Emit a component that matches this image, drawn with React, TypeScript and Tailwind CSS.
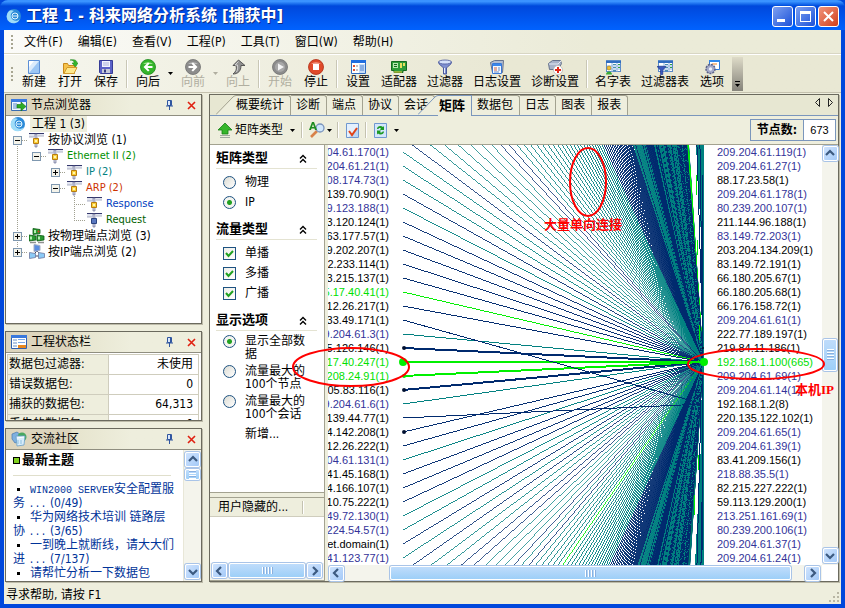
import type { ReactNode } from 'react';
import clsx from 'clsx';

const HUB_X = 312;
const HUB_ROW = 15;
const ROW_H = 14;

const TEAL = '#008080';
const NAVY = '#002a6e';
const GREEN = '#00f000';

type Tone = 'k' | 'b' | 'g';

const toneClass: Record<Tone, string> = {
  k: 'text-black',
  b: 'text-[#333399]',
  g: 'text-[#00e000]',
};

const leftNodes: [string, Tone][] = [
  ['04.61.170(1)', 'b'],
  ['204.61.21(1)', 'b'],
  ['08.174.73(1)', 'b'],
  ['139.70.90(1)', 'k'],
  ['9.123.188(1)', 'b'],
  ['3.120.124(1)', 'k'],
  ['63.177.57(1)', 'k'],
  ['9.202.207(1)', 'k'],
  ['2.233.114(1)', 'k'],
  ['3.215.137(1)', 'k'],
  ['5.17.40.41(1)', 'g'],
  ['12.26.217(1)', 'k'],
  ['33.49.171(1)', 'k'],
  ['9.204.61.3(1)', 'b'],
  ['5.126.146(1)', 'k'],
  ['17.40.247(1)', 'g'],
  ['208.24.91(1)', 'g'],
  ['05.83.116(1)', 'k'],
  ['9.204.61.6(1)', 'b'],
  ['139.44.77(1)', 'k'],
  ['4.142.208(1)', 'k'],
  ['12.26.222(1)', 'k'],
  ['04.61.131(1)', 'b'],
  ['41.45.168(1)', 'k'],
  ['4.166.107(1)', 'k'],
  ['10.75.222(1)', 'k'],
  ['49.72.130(1)', 'b'],
  ['224.54.57(1)', 'b'],
  ['et.domain(1)', 'k'],
  ['41.123.77(1)', 'b'],
];

const rightNodes: [string, Tone][] = [
  ['209.204.61.119(1)', 'b'],
  ['209.204.61.27(1)', 'b'],
  ['88.17.23.58(1)', 'k'],
  ['209.204.61.178(1)', 'b'],
  ['80.239.200.107(1)', 'b'],
  ['211.144.96.188(1)', 'k'],
  ['83.149.72.203(1)', 'b'],
  ['203.204.134.209(1)', 'k'],
  ['83.149.72.191(1)', 'k'],
  ['66.180.205.67(1)', 'k'],
  ['66.180.205.68(1)', 'k'],
  ['66.176.158.72(1)', 'k'],
  ['209.204.61.61(1)', 'b'],
  ['222.77.189.197(1)', 'k'],
  ['219.84.11.186(1)', 'k'],
  ['192.168.1.100(665)', 'g'],
  ['209.204.61.69(1)', 'b'],
  ['209.204.61.14(1)', 'b'],
  ['192.168.1.2(8)', 'k'],
  ['220.135.122.102(1)', 'k'],
  ['209.204.61.65(1)', 'b'],
  ['209.204.61.39(1)', 'b'],
  ['83.41.209.156(1)', 'k'],
  ['218.88.35.5(1)', 'b'],
  ['82.215.227.222(1)', 'k'],
  ['59.113.129.200(1)', 'k'],
  ['213.251.161.69(1)', 'b'],
  ['80.239.200.106(1)', 'b'],
  ['209.204.61.37(1)', 'b'],
  ['209.204.61.24(1)', 'b'],
];

const navyRows = [3, 5, 6, 7, 8, 9, 11, 14, 17, 20, 21, 23, 24, 25, 28, 30, 33, 34, 38, 40, -1, -8, -9];
const navyBands = [[47, 66], [82, 94], [98, 104], [120, 130], [145, 150], [176, 215], [225, 280]];

function lineColor(row: number) {
  if (row === 10 || row === 15 || row === 16 || row === 46) return GREEN;
  const n = Math.abs(row - HUB_ROW);
  if (n < 30) return navyRows.includes(row) ? NAVY : TEAL;
  if (row < 0 && n > 284 && n < 315) return GREEN;
  if (row > 0 && (n === 288 || n === 296)) return GREEN;
  if (navyBands.some(([a, b]) => n >= a && n <= b)) return n > 100 && n % 7 === 3 ? TEAL : NAVY;
  return n > 66 && (n * 37) % 11 < 2 ? NAVY : TEAL;
}

// stroke that covers one pixel per step along the longer axis
function hairline(dx: number, dy: number) {
  return Math.max(Math.abs(dx), Math.abs(dy)) / Math.hypot(dx, dy);
}

function MatrixLines() {
  const rows: number[] = [];
  for (let r = -305; r <= 340; r++) {
    if (r !== 12 && r !== 19) rows.push(r);
  }
  // far rows first so the near ones stay on top
  rows.sort((a, b) => Math.abs(b - HUB_ROW) - Math.abs(a - HUB_ROW));
  const y = (r: number) => r * ROW_H + 7;
  return (
    <svg className="h-[420px] w-full" viewBox="0 0 320 420" preserveAspectRatio="none" shapeRendering="crispEdges">
      {rows.map(r => (
        <line
          key={r}
          x1={13}
          y1={y(r)}
          x2={HUB_X}
          y2={y(HUB_ROW)}
          stroke={lineColor(r)}
          strokeWidth={r >= 14 && r <= 17 ? 2 : hairline(HUB_X - 13, (r - HUB_ROW) * ROW_H)}
        />
      ))}
      <path d="M13 175L312 259M13 273L312 259" stroke={NAVY} fill="none" />
      <path d="M305 0H313V420H304L310 300L311 217L310 90Z" fill={TEAL} />
      <path d="M309 0L312 217M306 0L311 170M312 30V200M310 260L306 420M312 230V405M312 300L310 420" stroke={NAVY} fill="none" />
      <path d="M306 30V50M307 95V110M309 180V195M308 310V325M304 350V370" stroke={GREEN} fill="none" />
      <g shapeRendering="auto">
        <circle cx="14" cy="203" r="2" fill="#001030" />
        <circle cx="13" cy="217" r="4" fill={GREEN} />
        <circle cx="14" cy="231" r="2" fill={GREEN} />
        <circle cx="14" cy="245" r="2" fill="#001030" />
        <circle cx="14" cy="287" r="2" fill="#001030" />
        <circle cx="312" cy="203" r="1" fill="#001030" />
        <circle cx="313" cy="217" r="4" fill={GREEN} />
      </g>
    </svg>
  );
}

function Icon({ children, size = 16 }: { children: ReactNode; size?: number }) {
  return (
    <svg width={size} height={size} viewBox="0 0 16 16" className="shrink-0" aria-hidden="true">
      {children}
    </svg>
  );
}

const tableBase = (
  <>
    <rect x="1.5" y="1.5" width="14" height="11" fill="#fff" stroke="#5a8ac8" />
    <path d="M1 2h15v2H1z" fill="#2f6cc0" />
    <path d="M2 7h13M2 10h13" stroke="#8fb2de" />
    <path d="M7 4v9M12 4v9" stroke="#8fb2de" />
    <path d="M8 5h3v1H8zM8 8h3v1H8zM8 11h3v1H8z" fill="#4a90b0" />
    <path d="M13 5h2v1h-2zM13 8h2v1h-2z" fill="#30a040" />
  </>
);

const icons: Record<string, ReactNode> = {
  globe: (
    <>
      <circle cx="8" cy="8" r="7" fill="#2b8ad8" />
      <path d="M3 3a7 7 0 1 0 11 8c-3 3-8 2-9-2-1-3 1-5 3-6-2-1-4-1-5 0z" fill="#9fdcf8" />
      <circle cx="9" cy="8" r="3" fill="none" stroke="#e6f8ff" />
      <path d="M7 8h5" stroke="#e6f8ff" />
    </>
  ),
  new: (
    <>
      <path d="M2.500 1.500h11v13h-11z" fill="#dcebfb" stroke="#5c8fd6" />
      <path d="M13 2L3 14h10z" fill="#9cc6f4" />
      <path d="M3 2h5L3 8z" fill="#fff" />
    </>
  ),
  open: (
    <>
      <path d="M1.500 14.500v-10h4l1 2h6v8z" fill="#f6c34c" stroke="#c98a1c" />
      <path d="M2 14.500l3-6h10l-3 6z" fill="#fde88c" stroke="#d29a2c" />
      <path d="M8 1c3 0 4 1 4 3h-2l3.500 4L16 4h-1c0-3-3-4-7-3z" fill="#35b52a" stroke="#16801a" strokeWidth=".5" />
    </>
  ),
  save: (
    <>
      <path d="M1.500 1.500h13v13h-12l-1-1z" fill="#5b62c8" stroke="#363c96" />
      <path d="M4 2h8v6H4z" fill="#f2f4ff" />
      <path d="M5 4h6M5 6h6" stroke="#a9b0da" />
      <path d="M4 10h8v4H4z" fill="#c6c9d8" />
      <path d="M6 10.500h2v3H6z" fill="#343a80" />
    </>
  ),
  back: (
    <>
      <circle cx="8" cy="8" r="7.500" fill="#35b52a" stroke="#18881a" strokeWidth=".8" />
      <path d="M3 5a6 4 0 0 1 10 0z" fill="#9be58c" />
      <path d="M12.500 7H7.500l2-2.500L8 3.500 3.500 8 8 12.500l1.500-1L7.500 9h5z" fill="#fff" />
    </>
  ),
  forward: (
    <>
      <circle cx="8" cy="8" r="7.500" fill="#8c8c8c" stroke="#6e6e6e" strokeWidth=".8" />
      <path d="M3 5a6 4 0 0 1 10 0z" fill="#bcbcbc" />
      <path d="M3.500 7h5l-2-2.500L8 3.500l4.500 4.500L8 12.500l-1.500-1L8.500 9h-5z" fill="#fff" />
    </>
  ),
  up: (
    <>
      <path d="M8.500 1L3 6.500h3c1 4 0 6-3 8.500 5 0 8-3 8-8.500h4z" fill="#909090" stroke="#4c4c4c" strokeWidth=".9" />
      <path d="M8.500 2.500L5 6h2.500c.5 3 0 5-1 7" fill="none" stroke="#d4d4d4" />
    </>
  ),
  start: (
    <>
      <circle cx="8" cy="8" r="7.500" fill="#8c8c8c" stroke="#707070" strokeWidth=".8" />
      <circle cx="8" cy="8" r="5" fill="#a8a8a8" />
      <path d="M6 4.500v7L12 8z" fill="#f4f4f4" />
    </>
  ),
  stop: (
    <>
      <circle cx="8" cy="8" r="7.500" fill="#df4a2a" stroke="#b02c14" strokeWidth=".8" />
      <path d="M3 5a6 4 0 0 1 10 0z" fill="#f2a08c" />
      <path d="M5 5h6v6H5z" fill="#fff" />
    </>
  ),
  settings: (
    <>
      <path d="M1.500 1.500h14v13h-14z" fill="#fff" stroke="#2f6cc0" />
      <path d="M1 1h15v3H1z" fill="#1f6ee0" />
      <path d="M3 6h2v2H3zM3 10h2v2H3z" fill="#e05030" />
      <path d="M6 7h2M6 11h2" stroke="#888" />
      <path d="M9 5h6v9H9z" fill="#c6ddf8" />
      <path d="M10 7h4M10 9h4M10 11h4" stroke="#4a80d0" />
    </>
  ),
  adapter: (
    <>
      <path d="M.5 2.500h15v9H12v2H3v-2H.5z" fill="#2e9c3a" stroke="#156a20" />
      <path d="M2 4h5v5H2z" fill="#b8e8b0" />
      <path d="M3 5.500h3M3 7.500h3" stroke="#156a20" />
      <path d="M9 4h2v5H9zM12 4h2v3h-2z" fill="#e8e060" />
      <path d="M4 12v2M6 12v2M8 12v2M10 12v2" stroke="#f0d040" />
    </>
  ),
  filter: (
    <>
      <path d="M1.500 3c0 3 4 4 5 6v6h3V9c1-2 5-3 5-6z" fill="#7f90d0" stroke="#4a589c" />
      <ellipse cx="8" cy="3" rx="6.500" ry="2" fill="#d6e2fa" stroke="#4a589c" strokeWidth=".8" />
      <path d="M7.500 9v5" stroke="#e4ebff" />
    </>
  ),
  logset: (
    <>
      <path d="M1.500 3.500l4-2h9l-1 12h-10z" fill="#b4bed0" stroke="#66728c" />
      <path d="M3.500 4.500h9v10h-9z" fill="#f4f8ff" stroke="#3a78d8" />
      <path d="M4 5h8v2H4z" fill="#3a88ec" />
      <path d="M5 9h3M5 11h3" stroke="#d06040" />
      <path d="M9 9h2M9 11h2M5 13h5" stroke="#6a8cc0" />
    </>
  ),
  diagset: (
    <>
      <path d="M1.500 4.500l4-3h8l1 3-3 6h-9z" fill="#a6b2c8" stroke="#66728c" />
      <path d="M2 5h9l3-3" stroke="#e4eaf4" fill="none" />
      <circle cx="11" cy="11" r="4.500" fill="#fff" stroke="#b0b0b0" strokeWidth=".7" />
      <path d="M10 8h2v2h2v2h-2v2h-2v-2H8v-2h2z" fill="#e02818" />
    </>
  ),
  nametable: (
    <>
      {tableBase}
      <circle cx="4" cy="9" r="2" fill="#f0c030" stroke="#a07818" strokeWidth=".6" />
      <path d="M1 15.500c0-4 6-4 6 0z" fill="#3aa838" />
    </>
  ),
  filtertable: (
    <>
      {tableBase}
      <path d="M0 7.500h9L5.800 11v4.500H3.500V11z" fill="#3858c0" stroke="#182c80" strokeWidth=".6" />
    </>
  ),
  options: (
    <>
      <path d="M5.500 1.500h10v9h-10z" fill="#fff" stroke="#2f78d8" />
      <path d="M5 1h11v2H5z" fill="#2f88ec" />
      <path d="M8 5h5" stroke="#f08020" />
      <circle cx="6.500" cy="10" r="4.500" fill="#a4aac8" stroke="#5c6288" strokeDasharray="2 1" strokeWidth="1.500" />
      <circle cx="6.500" cy="10" r="1.700" fill="#eef0fa" />
    </>
  ),
  nodes: (
    <>
      <path d="M.5 2.500h15v11H.5z" fill="#eef6ff" stroke="#3a6cb0" />
      <path d="M0 2h16v3H0z" fill="#3a7ae0" />
      <path d="M2 7h4M2 9h4M2 11h4" stroke="#5a88c8" />
      <path d="M6 7.500h4V5l5 4.500-5 4.500v-3H6z" fill="#2cab24" stroke="#12700e" strokeWidth=".6" />
    </>
  ),
  status: (
    <>
      <path d="M.5 1.500h15v13H.5z" fill="#fff" stroke="#3060b0" />
      <path d="M0 1h16v3H0z" fill="#3a78dc" />
      <path d="M2 6h4M2 9h4M2 12h4" stroke="#6a90c8" />
      <path d="M7 5.500h7M7 8.500h7" stroke="#7aa8e8" />
      <path d="M7 11h8v3H7z" fill="#e88820" />
    </>
  ),
  community: (
    <>
      <path d="M1 3l5-2 4 3-1 6-5 2-3-4z" fill="#7fb0e0" stroke="#4878b0" strokeWidth=".7" />
      <circle cx="11" cy="6" r="4.500" fill="#4aa860" />
      <path d="M5 5h9l-1 9-7 1z" fill="#d8ecfa" stroke="#6aa0c8" strokeWidth=".8" />
      <path d="M6 7l7-1" stroke="#fff" />
      <path d="M7 9v4M10 9v4" stroke="#8cc0e0" />
    </>
  ),
  proto: (
    <>
      <path d="M0 2h6v3H0zM9 2h6v1.500H9z" fill="#e0e3ee" />
      <path d="M0 1.500h15" stroke="#34386c" />
      <path d="M0 5h5M9 4h6" stroke="#8a90ac" strokeWidth=".7" />
      <path d="M6 2h2v13H6z" fill="#d4d8e4" stroke="#5a608c" strokeWidth=".6" />
      <path d="M4.500 6.500h5v5h-5z" fill="#fbd038" stroke="#b87c10" />
      <path d="M6 8h2v2H6z" fill="#fff3b0" />
    </>
  ),
  protoBlue: (
    <>
      <path d="M0 2h6v3H0zM9 2h6v1.500H9z" fill="#e0e3ee" />
      <path d="M0 1.500h15" stroke="#34386c" />
      <path d="M0 5h5M9 4h6" stroke="#8a90ac" strokeWidth=".7" />
      <path d="M6 2h2v13H6z" fill="#d4d8e4" stroke="#5a608c" strokeWidth=".6" />
      <path d="M4.500 6.500h5v5h-5z" fill="#5a78c0" stroke="#2c4480" />
    </>
  ),
  physical: (
    <>
      <path d="M4 .5l7 1v4l-7 1zM0 7l7 1v4l-7 1zM8 7l7 1v4l-7 1z" fill="#2a9a30" stroke="#0c5a14" strokeWidth=".8" />
      <path d="M5 2h2v3H5zM1 8.500h2v3H1zM9 8.500h2v3H9z" fill="#b4ecb0" />
      <circle cx="9.500" cy="3.500" r="1" fill="#e04020" />
      <path d="M1 14.500h6M9 14.500h6" stroke="#909090" strokeWidth="1.500" />
    </>
  ),
  ipnode: (
    <>
      <path d="M8 7L3 12M8 7l5 5M3 12h10" stroke="#404860" />
      <path d="M5 .5l6 1v5l-6 1z" fill="#5a8ce0" stroke="#a8b0c4" />
      <path d="M.5 8.500l6 1v4l-6 1zM9.500 8.500l6 1v4l-6 1z" fill="#8ccaf6" stroke="#7078a0" strokeWidth=".8" />
    </>
  ),
  greenup: (
    <>
      <path d="M8 1l7 7h-4v4H5V8H1z" fill="#35b52a" stroke="#168018" strokeWidth=".8" />
      <path d="M3 13.500h10M3 15.500h10" stroke="#a0a8a0" />
    </>
  ),
  find: (
    <>
      <path d="M8 9l-6 6" stroke="#d8824a" strokeWidth="2.600" />
      <circle cx="11" cy="6" r="4" fill="#cfe6fb" stroke="#7a94bc" strokeWidth="1.300" />
      <path d="M0 8L3 0h2l3 8H6L5.500 6.500h-3L2 8zM3 5h2L4 2z" fill="#1c8c20" />
    </>
  ),
  checkpage: (
    <>
      <path d="M2.500 1.500h12v14h-12z" fill="#e4f0fd" stroke="#6f98d0" />
      <path d="M14 5v10H5z" fill="#b8d6f6" />
      <path d="M5 9l3 4 5-7" fill="none" stroke="#e04418" strokeWidth="2" />
    </>
  ),
  refresh: (
    <>
      <path d="M2.500 1.500h12v14h-12z" fill="#d4e6fb" stroke="#6f98d0" />
      <path d="M5 7c0-3 4-4 6-2l1-1v4H8l1-1.500C8 5.500 6.500 6 6.500 7z" fill="#1c9a24" />
      <path d="M12 9.500c0 3-4 4-6 2l-1 1v-4h4L8 10c1 1 2.500.500 2.500-.500z" fill="#1c9a24" />
    </>
  ),
};

function Caret({ className = 'text-black' }: { className?: string }) {
  return (
    <svg width="5" height="3" viewBox="0 0 5 3" className={clsx('shrink-0', className)} aria-hidden="true">
      <path d="M0 0h5L2.500 3z" fill="currentColor" />
    </svg>
  );
}

function Separator() {
  return <span className="mx-[2px] h-7 w-[2px] border-l border-[#c9c7b6] bg-white" />;
}

function Grip() {
  return (
    <span className="flex w-[12px] flex-col items-center gap-[2px] pl-1">
      {[0, 1, 2, 3].map(i => (
        <span key={i} className="size-[2px] bg-[#a8a692]" />
      ))}
    </span>
  );
}

function TitleBar() {
  return (
    <header className="flex h-[30px] shrink-0 items-center gap-1 rounded-t-lg bg-linear-to-b from-[#3a93ff] from-5% via-[#0048dc] via-20% to-[#0062ff] px-[6px] pt-[2px]">
      <Icon>{icons.globe}</Icon>
      <h1 className="flex-1 text-[16px] leading-5 font-bold text-white [text-shadow:1px_1px_0_#0a2a8a]">
        工程 1 - 科来网络分析系统 [捕获中]
      </h1>
      <div className="flex gap-[2px]">
        <button aria-label="最小化" className="flex size-[21px] items-end rounded-[3px] border border-white bg-linear-to-br from-[#7d9ff0] to-[#1c4fd8] p-1">
          <span className="h-[3px] w-2 bg-white" />
        </button>
        <button aria-label="最大化" className="grid size-[21px] place-items-center rounded-[3px] border border-white bg-linear-to-br from-[#7d9ff0] to-[#1c4fd8]">
          <span className="size-[11px] border border-t-[3px] border-white" />
        </button>
        <button aria-label="关闭" className="grid size-[21px] place-items-center rounded-[3px] border border-white bg-linear-to-br from-[#f0937a] to-[#d03c14]">
          <svg width="11" height="11" viewBox="0 0 11 11">
            <path d="M1 1l9 9M10 1L1 10" stroke="#fff" strokeWidth="2" />
          </svg>
        </button>
      </div>
    </header>
  );
}

const menus = ['文件(F)', '编辑(E)', '查看(V)', '工程(P)', '工具(T)', '窗口(W)', '帮助(H)'];

function MenuBar() {
  return (
    <nav className="flex h-6 shrink-0 items-center border-b border-[#d8d6c4] bg-linear-to-r from-[#fbfbf8] to-[#ebebd8] to-70%">
      <Grip />
      {menus.map(m => (
        <button key={m} className="pr-[7px] pl-2 text-[12px] leading-4">{m}</button>
      ))}
    </nav>
  );
}

function Tool({ icon, label, disabled, menu }: { icon: string; label: string; disabled?: boolean; menu?: boolean }) {
  return (
    <>
      <button
        disabled={disabled}
        className="flex min-w-9 shrink-0 flex-col items-center px-[5px] pt-px text-[12px] leading-[14px] disabled:text-[#b0aea0]"
      >
        <Icon>{icons[icon]}</Icon>
        {label}
      </button>
      {menu && (
        <button aria-label={`${label}菜单`} className="flex w-[9px] items-center justify-center">
          <Caret className={disabled ? 'text-[#b0aea0]' : 'text-black'} />
        </button>
      )}
    </>
  );
}

function ToolBar() {
  return (
    <div className="flex h-[39px] shrink-0 items-center border-t border-b border-t-white border-b-[#c4c1ae] bg-linear-to-r from-[#f6f6ee] to-[#e9e8d4] to-60%">
      <Grip />
      <Tool icon="new" label="新建" />
      <Tool icon="open" label="打开" />
      <Tool icon="save" label="保存" />
      <Separator />
      <Tool icon="back" label="向后" menu />
      <Tool icon="forward" label="向前" menu disabled />
      <Tool icon="up" label="向上" disabled />
      <Separator />
      <Tool icon="start" label="开始" disabled />
      <Tool icon="stop" label="停止" />
      <Separator />
      <Tool icon="settings" label="设置" />
      <Tool icon="adapter" label="适配器" />
      <Tool icon="filter" label="过滤器" />
      <Tool icon="logset" label="日志设置" />
      <Tool icon="diagset" label="诊断设置" />
      <Separator />
      <Tool icon="nametable" label="名字表" />
      <Tool icon="filtertable" label="过滤器表" />
      <Tool icon="options" label="选项" />
      <button
        aria-label="更多"
        className="ml-[2px] flex h-[34px] w-[11px] flex-col items-center justify-end gap-[2px] bg-linear-to-b from-[#dedbc8] to-[#85837a] pb-1"
      >
        <span className="h-px w-[5px] bg-black" />
        <Caret />
      </button>
    </div>
  );
}

function Panel({ icon, title, className, children }: { icon: string; title: string; className?: string; children: ReactNode }) {
  return (
    <section
      className={clsx(
        'flex flex-col overflow-hidden border border-[#6b6a5e] bg-white shadow-[1px_1px_0_#bdbba9]',
        className,
      )}
    >
      <div className="flex h-[21px] shrink-0 items-center gap-1 border-b border-[#8f8e80] bg-linear-to-r from-[#ddd5bd] from-33% via-[#e6e4cd] via-34% to-[#eeeedd] to-64% px-[5px]">
        <Icon>{icons[icon]}</Icon>
        <h2 className="flex-1 text-[12px] leading-4">{title}</h2>
        <button aria-label="固定" className="mr-[10px]">
          <svg width="7" height="10" viewBox="0 0 7 10">
            <path d="M1.500.5h4v5h-4z" fill="#dce8fa" stroke="#3056a0" />
            <path d="M4 1h1v4H4z" fill="#3056a0" />
            <path d="M0 6h7M3.500 6v4" stroke="#3056a0" />
          </svg>
        </button>
        <button aria-label={`关闭${title}`}>
          <svg width="9" height="9" viewBox="0 0 9 9">
            <path d="M1 1l7 7M8 1L1 8" stroke="#e02010" strokeWidth="1.600" />
          </svg>
        </button>
      </div>
      {children}
    </section>
  );
}

function Expander({ open }: { open: boolean }) {
  return (
    <svg width="9" height="9" viewBox="0 0 9 9" className="shrink-0" shapeRendering="crispEdges">
      <rect x="0.5" y="0.5" width="8" height="8" fill="#f4f3ea" stroke="#7f98b0" />
      <path d="M2 4.500h5" stroke="#000" />
      {!open && <path d="M4.500 2v5" stroke="#000" />}
    </svg>
  );
}

interface TreeRow {
  label: string;
  icon: string;
  indent: string;
  color?: string;
  open?: boolean;
}

const tree: TreeRow[] = [
  { label: '按协议浏览 (1)', icon: 'proto', indent: 'pl-[7px]', open: true },
  { label: 'Ethernet II (2)', icon: 'proto', indent: 'pl-[26px]', color: 'text-[#009000]', open: true },
  { label: 'IP (2)', icon: 'proto', indent: 'pl-[45px]', color: 'text-[#008080]', open: false },
  { label: 'ARP (2)', icon: 'proto', indent: 'pl-[45px]', color: 'text-[#cc3300]', open: true },
  { label: 'Response', icon: 'proto', indent: 'pl-[68px]', color: 'text-[#0040c0]' },
  { label: 'Request', icon: 'protoBlue', indent: 'pl-[68px]', color: 'text-[#006000]' },
  { label: '按物理端点浏览 (3)', icon: 'physical', indent: 'pl-[7px]', open: false },
  { label: '按IP端点浏览 (2)', icon: 'ipnode', indent: 'pl-[7px]', open: false },
];

function NodeBrowser() {
  return (
    <Panel icon="nodes" title="节点浏览器" className="min-h-[200px] flex-1">
      <ul className="relative text-[11px] leading-4">
        {/* guide lines of the tree */}
        <svg width="80" height="144" className="absolute top-0 left-0" shapeRendering="crispEdges" aria-hidden="true">
          <path d="M11.500 30V116M11.500 126V132M68.500 80V104" stroke="#a0a090" strokeDasharray="1 1" />
        </svg>
        <li className="flex h-4 items-center gap-1 pl-1 text-[12px]">
          <Icon>{icons.globe}</Icon>
          <span className="bg-[#eeeedd] px-[2px]">工程 1 (3)</span>
        </li>
        {tree.map(row => (
          <li key={row.label} className={clsx('flex h-4 items-center', row.indent)}>
            {row.open !== undefined && <Expander open={row.open} />}
            <span className={clsx('mr-[2px] border-t border-dotted border-[#a0a090]', row.open === undefined ? 'w-[11px]' : 'w-[5px]')} />
            <Icon>{icons[row.icon]}</Icon>
            <span className={clsx('ml-[3px]', row.color, row.indent === 'pl-[7px]' && 'text-[12px]')}>{row.label}</span>
          </li>
        ))}
      </ul>
    </Panel>
  );
}

const stats = [
  ['数据包过滤器:', '未使用'],
  ['错误数据包:', '0'],
  ['捕获的数据包:', '64,313'],
  ['丢失的数据包:', '0'],
];

function StatusPanel() {
  return (
    <Panel icon="status" title="工程状态栏" className="h-[90px] shrink-0">
      <table className="m-px mr-[2px] border-collapse text-[12px] leading-[19px]">
        <tbody>
          {stats.map(([name, value]) => (
            <tr key={name} className="h-5">
              <th scope="row" className="w-[101px] border border-[#cfcdbd] bg-[#eeeedd] p-0 pl-px text-left font-normal">{name}</th>
              <td className="border border-[#cfcdbd] p-0 pr-[5px] text-right">{value}</td>
            </tr>
          ))}
        </tbody>
      </table>
    </Panel>
  );
}

const arrows = {
  up: 'M1 6l4-4 4 4',
  down: 'M1 3l4 4 4-4',
  left: 'M6 1L2 5l4 4',
  right: 'M3 1l4 4-4 4',
};

function ScrollButton({ dir }: { dir: keyof typeof arrows }) {
  return (
    <button
      aria-label={dir}
      className="grid size-[15px] shrink-0 place-items-center rounded-[2px] border border-white bg-linear-to-br from-[#cfe3fd] to-[#a4caf8] shadow-[0_0_0_1px_#a9c4e8]"
    >
      <svg width="10" height="10" viewBox="0 0 10 10">
        <path d={arrows[dir]} fill="none" stroke="#3c5a80" strokeWidth="2.200" />
      </svg>
    </button>
  );
}

function Thumb({ vertical, className }: { vertical?: boolean; className?: string }) {
  return (
    <div
      className={clsx(
        'flex shrink-0 items-center justify-center gap-px rounded-[2px] border border-white bg-linear-to-b from-[#bfdcfb] to-[#9dcff8] shadow-[0_0_0_1px_#a9c4e8]',
        vertical && 'flex-col',
        className,
      )}
    >
      {[0, 1, 2, 3].map(i => (
        <span key={i} className={clsx('border-white bg-[#8ab0e0]', vertical ? 'h-[2px] w-[7px] border-t' : 'h-[7px] w-[2px] border-l')} />
      ))}
    </div>
  );
}

const topics = [
  { latin: 'WIN2000 SERVER', title: '安全配置服务', count: '(0/49)' },
  { title: '华为网络技术培训 链路层协', count: '(3/65)' },
  { title: '一到晚上就断线，请大大们进', count: '(7/137)' },
  { title: '请帮忙分析一下数据包', count: '' },
];

function Community() {
  return (
    <Panel icon="community" title="交流社区" className="h-[154px] shrink-0">
      <div className="flex min-h-0 flex-1">
        <div className="min-w-0 flex-1 overflow-hidden pl-[7px]">
          <h3 className="mr-[12px] flex h-[26px] items-center gap-[2px] border-b border-[#e0dfcc] pb-[5px] text-[13px] font-bold">
            <span className="size-[7px] border border-black bg-[#80d020]" />
            最新主题
          </h3>
          <ul className="w-[163px] pt-[6px] text-[12px] leading-[14px] text-[#003399]">
            {topics.map(t => (
              <li key={t.title}>
                <span className="mr-[10px] ml-1 inline-block size-[3px] bg-black align-middle" />
                <a href="#topic">
                  {t.latin && <span className="font-['Liberation_Mono',monospace] text-[10px] leading-none">{t.latin}</span>}
                  {t.title}
                  {t.count && <> <span className="font-['Liberation_Mono',monospace] text-[10px] leading-none">...</span> {t.count}</>}
                </a>
              </li>
            ))}
          </ul>
        </div>
        <div className="flex w-[18px] flex-col items-center gap-[2px] border-l border-[#e8e7d8] bg-[#f4f4ec] py-[2px]">
          <ScrollButton dir="up" />
          <Thumb vertical className="h-[11px] w-[15px]" />
          <span className="flex-1" />
          <ScrollButton dir="down" />
        </div>
      </div>
    </Panel>
  );
}

function Slant({ active }: { active?: boolean }) {
  return (
    <svg width="20" height="20" viewBox="0 0 20 20" className={clsx('shrink-0', active ? '-ml-[17px]' : '-ml-[14px]')}>
      <path d="M0 20L16 3Q18 .5 20 .5V20z" fill="#eeeedd" />
      <path d="M0 19.500L16 3Q18 .5 20 .5" fill="none" stroke={active ? '#7a96bc' : '#a3a290'} />
    </svg>
  );
}

const tabs = ['概要统计', '诊断', '端点', '协议', '会话', '矩阵', '数据包', '日志', '图表', '报表'];

function Tabs() {
  return (
    <div className="flex h-[21px] shrink-0 items-end border-b border-[#7a96bc] bg-[#e7e7d2] pl-5" role="tablist">
      {tabs.map((tab, i) => {
        const active = tab === '矩阵';
        return (
          <div key={tab} className={clsx('flex shrink-0', active ? 'z-10 -mb-px h-[21px]' : 'h-5')}>
            {(i === 0 || active) && <Slant active={active} />}
            <button
              role="tab"
              aria-selected={active}
              className={clsx(
                'flex items-start border-t border-r bg-[#eeeedd] text-[12px] leading-[19px]',
                active
                  ? 'border-[#7a96bc] pr-[6px] pl-px text-[13px] font-bold'
                  : 'rounded-tr-[3px] border-[#a3a290] pr-[6px]',
                !active && (i === 0 ? 'pl-0' : 'pl-[5px]'),
              )}
            >
              {tab}
            </button>
          </div>
        );
      })}
      <span className="flex-1" />
      <div className="mb-2 flex gap-[8px] pr-1">
        <button aria-label="向左">
          <svg width="6" height="9" viewBox="0 0 6 9"><path d="M5.500.5v8l-4-4z" fill="none" stroke="#222" /></svg>
        </button>
        <button aria-label="向右">
          <svg width="6" height="9" viewBox="0 0 6 9"><path d="M.5.5v8l4-4z" fill="none" stroke="#222" /></svg>
        </button>
      </div>
    </div>
  );
}

function MatrixBar() {
  return (
    <div className="flex h-[29px] shrink-0 items-center border-b border-[#a3a290] bg-[#eeeedd] pr-[2px] pl-[7px]">
      <button className="flex items-center gap-[2px] text-[12px]">
        <Icon>{icons.greenup}</Icon>
        矩阵类型
        <Caret className="ml-[5px]" />
      </button>
      <span className="mx-[6px] h-4 w-[2px] border-l border-[#c4c2b0] bg-white" />
      <button aria-label="查找" className="flex items-center gap-[2px]">
        <Icon>{icons.find}</Icon>
        <Caret />
      </button>
      <span className="mx-[5px] h-4 w-[2px] border-l border-[#c4c2b0] bg-white" />
      <button aria-label="选择"><Icon>{icons.checkpage}</Icon></button>
      <span className="mx-[5px] h-4 w-[2px] border-l border-[#c4c2b0] bg-white" />
      <button aria-label="刷新" className="flex items-center gap-[6px]">
        <Icon>{icons.refresh}</Icon>
        <Caret />
      </button>
      <span className="flex-1" />
      <dl className="flex h-[22px] border border-[#7a96bc] text-[12px] leading-5">
        <dt className="border-r border-[#7a96bc] px-[6px] font-bold">节点数:</dt>
        <dd className="w-[31px] bg-white text-center font-['Liberation_Sans',Arial,sans-serif] text-[11px]">673</dd>
      </dl>
    </div>
  );
}

function Group({ title, children }: { title: string; children: ReactNode }) {
  return (
    <fieldset className="mb-[7px] pr-[7px] pl-[6px]">
      <legend className="sr-only">{title}</legend>
      <div className="mb-[3px] flex h-[21px] items-center justify-between border-b border-[#e4e3d2] pr-[10px] text-[13px] font-bold">
        {title}
        <svg width="8" height="9" viewBox="0 0 8 9">
          <path d="M1 4.500l3-3 3 3M1 8.500l3-3 3 3" fill="none" stroke="#000" strokeWidth="1.400" />
        </svg>
      </div>
      {children}
    </fieldset>
  );
}

function Radio({ name, label, checked, multi }: { name: string; label: string; checked?: boolean; multi?: boolean }) {
  return (
    <label className={clsx('flex gap-[9px] pl-[7px] text-[12px]', multi ? 'mt-1 items-start leading-[13px]' : 'h-5 items-center')}>
      <input
        type="radio"
        name={name}
        defaultChecked={checked}
        className="size-[13px] shrink-0 appearance-none rounded-full border border-[#1d5281] bg-linear-to-br from-[#dcdcd4] to-white checked:bg-[radial-gradient(circle,#21a121_2px,#f4f4f0_3px)]"
      />
      <span className="w-[62px]">{label}</span>
    </label>
  );
}

function Check({ label }: { label: string }) {
  return (
    <label className="flex h-5 items-center gap-[9px] pl-[7px] text-[12px]">
      <span className="grid size-[13px]">
        <input
          type="checkbox"
          defaultChecked
          className="peer col-start-1 row-start-1 size-[13px] appearance-none border border-[#1d5281] bg-linear-to-br from-[#eeeee8] to-white"
        />
        <svg viewBox="0 0 13 13" className="pointer-events-none invisible col-start-1 row-start-1 peer-checked:visible">
          <path d="M3 6l2.500 3L10 4" fill="none" stroke="#21a121" strokeWidth="2" />
        </svg>
      </span>
      {label}
    </label>
  );
}

function OptionsPane() {
  return (
    <aside className="flex w-[115px] shrink-0 flex-col border-r border-[#a3a290] bg-[#eeeedd]">
      <form className="flex-1 border-b border-[#a3a290] bg-white pt-[3px]">
        <Group title="矩阵类型">
          <Radio name="kind" label="物理" />
          <Radio name="kind" label="IP" checked />
        </Group>
        <Group title="流量类型">
          <Check label="单播" />
          <Check label="多播" />
          <Check label="广播" />
        </Group>
        <Group title="显示选项">
          <Radio name="show" label="显示全部数据" checked multi />
          <Radio name="show" label="流量最大的100个节点" multi />
          <Radio name="show" label="流量最大的100个会话" multi />
          <button type="button" className="mt-[3px] pl-[29px] text-[12px] leading-[14px]">新增...</button>
        </Group>
      </form>
      <div className="mt-1 flex h-5 shrink-0 items-center justify-between border-t border-b border-t-[#a3a290] border-b-[#cfcdbd] bg-[#eeeedd] pr-5 pl-2 text-[12px]">
        用户隐藏的...
        <span className="h-[13px] w-[2px] border-l border-[#c4c2b0] bg-white" />
      </div>
      <div className="flex h-16 shrink-0 flex-col justify-end border-b border-[#a3a290] bg-white">
        <div className="flex items-center justify-between bg-[#f4f4ec] px-[2px] pb-[2px]">
          <ScrollButton dir="left" />
          <Thumb className="h-[15px] w-[76px]" />
          <ScrollButton dir="right" />
        </div>
      </div>
    </aside>
  );
}

function NodeLabels({ nodes, className }: { nodes: [string, Tone][]; className: string }) {
  return (
    <ul className={clsx("shrink-0 overflow-hidden font-['Liberation_Sans',Arial,sans-serif] text-[11px] leading-[14px]", className)}>
      {nodes.map(([ip, tone]) => (
        <li key={ip} className={clsx('flex h-[14px] whitespace-nowrap', toneClass[tone])}>{ip}</li>
      ))}
    </ul>
  );
}

function Matrix() {
  return (
    <div className="flex min-w-0 flex-1 flex-col">
      <div className="flex flex-1 bg-white">
        <NodeLabels nodes={leftNodes} className="w-[62px] pr-px [&>li]:justify-end" />
        <div className="relative min-w-0 flex-1">
          <MatrixLines />
          <svg width="40" height="70" className="absolute top-[2px] left-[178px]">
            <ellipse cx="20" cy="35" rx="18" ry="34" fill="none" stroke="#f00" strokeWidth="2" />
          </svg>
          <strong className="absolute top-[71px] left-[154px] font-['Liberation_Serif','Noto_Sans_CJK_SC',serif] text-[13px] leading-[18px] font-bold whitespace-nowrap text-[#f00]">
            大量单向连接
          </strong>
        </div>
        <div className="relative">
          <NodeLabels nodes={rightNodes} className="w-[111px] pl-[6px]" />
          <svg width="140" height="32" className="absolute top-[203px] -left-[24px]">
            <ellipse cx="69" cy="16" rx="68" ry="15" fill="none" stroke="#f00" strokeWidth="2" />
          </svg>
          <strong className="absolute top-[236px] left-[84px] z-10 font-['Liberation_Serif','Noto_Sans_CJK_SC',serif] text-[13px] leading-[18px] font-bold whitespace-nowrap text-[#f00]">
            本机IP
          </strong>
        </div>
        <div className="flex w-4 shrink-0 flex-col items-center bg-[#f4f4ec] pt-px pb-[2px]">
          <ScrollButton dir="up" />
          <span className="flex-1" />
          <Thumb vertical className="h-8 w-[14px]" />
          <span className="flex-1" />
          <ScrollButton dir="down" />
        </div>
      </div>
      <div className="flex h-4 shrink-0 items-center bg-[#f4f4ec] pl-px">
        <ScrollButton dir="left" />
        <Thumb className="mr-[14px] ml-[46px] h-[14px] flex-1" />
        <ScrollButton dir="right" />
        <span className="ml-[2px] h-full w-4 bg-white" />
      </div>
    </div>
  );
}

export default function App() {
  return (
    <div className="flex min-h-screen flex-col bg-[#0048dc] font-['DejaVu_Sans_Condensed','Noto_Sans_CJK_SC',sans-serif] text-black">
      <TitleBar />
      <div className="mx-1 mb-1 flex flex-1 flex-col bg-[#eeeedd]">
        <MenuBar />
        <ToolBar />
        <main className="flex flex-1 gap-[7px] pt-px pr-[2px] pl-px">
          <div className="flex w-[197px] shrink-0 flex-col gap-[7px]">
            <NodeBrowser />
            <StatusPanel />
            <Community />
          </div>
          <section className="flex min-w-0 flex-1 flex-col border border-[#6b6a5e] bg-[#eeeedd] shadow-[1px_1px_0_#bdbba9]">
            <Tabs />
            <MatrixBar />
            <div className="relative flex flex-1 gap-[3px]">
              <OptionsPane />
              <Matrix />
              <svg width="120" height="42" className="pointer-events-none absolute top-[201px] left-[81px]">
                <ellipse cx="60" cy="21" rx="58" ry="19" fill="none" stroke="#f00" strokeWidth="2" />
              </svg>
            </div>
          </section>
        </main>
        <footer className="flex h-[22px] shrink-0 items-center justify-between pt-1 pl-[2px] text-[12px] leading-4">
          寻求帮助, 请按 F1
          <svg width="12" height="12" viewBox="0 0 12 12" className="self-end" shapeRendering="crispEdges">
            <path d="M8 0h2v2H8zM8 4h2v2H8zM4 4h2v2H4zM8 8h2v2H8zM4 8h2v2H4zM0 8h2v2H0z" fill="#b8b6a4" />
          </svg>
        </footer>
      </div>
    </div>
  );
}
